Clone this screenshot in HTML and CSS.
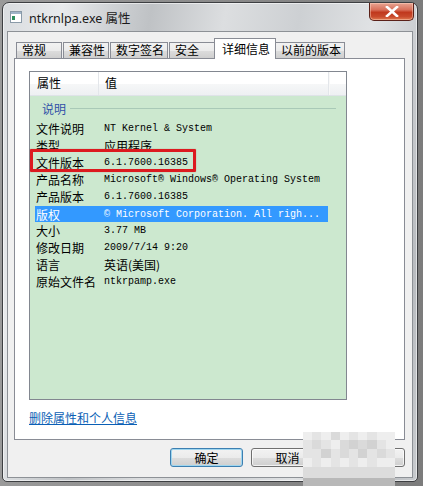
FILE: index.html
```html
<!DOCTYPE html>
<html lang="zh-CN">
<head>
<meta charset="utf-8">
<title>ntkrnlpa.exe 属性</title>
<link rel="stylesheet" href="styles.css">
</head>
<body>
<div class="window">
  <div class="titlebar">
    <svg class="app-icon" width="12" height="12" viewBox="0 0 12 12">
      <rect x="0.5" y="0.5" width="11" height="11" fill="#ffffff" stroke="#8a9aa8"/>
      <rect x="1" y="1" width="10" height="2" fill="#9fb4c8"/>
      <rect x="2" y="5" width="3" height="4" fill="#2f8f5f"/>
    </svg>
    <span class="title">ntkrnlpa.exe 属性</span>
    <div class="close-btn">
      <svg width="14" height="11" viewBox="0 0 14 11">
        <path d="M2 1 L12 10 M12 1 L2 10" stroke="#ffffff" stroke-width="2.6" stroke-linecap="square"/>
      </svg>
    </div>
  </div>
  <div class="client">
    <div class="tabs">
      <div class="tab">常规</div>
      <div class="tab">兼容性</div>
      <div class="tab">数字签名</div>
      <div class="tab">安全</div>
      <div class="tab selected">详细信息</div>
      <div class="tab">以前的版本</div>
    </div>
    <div class="page">
      <div class="list">
        <div class="list-header">
          <div class="hcol hcol-name">属性</div>
          <div class="hcol hcol-value">值</div>
          <div class="hcol hcol-rest"></div>
        </div>
        <div class="group">
          <span class="group-label">说明</span>
          <span class="group-line"></span>
        </div>
        <div class="row"><span class="name">文件说明</span><span class="value mono">NT Kernel &amp; System</span></div>
        <div class="row"><span class="name">类型</span><span class="value">应用程序</span></div>
        <div class="row"><span class="name">文件版本</span><span class="value mono">6.1.7600.16385</span></div>
        <div class="row"><span class="name">产品名称</span><span class="value mono">Microsoft® Windows® Operating System</span></div>
        <div class="row"><span class="name">产品版本</span><span class="value mono">6.1.7600.16385</span></div>
        <div class="row row-selected"><span class="name">版权</span><span class="value mono">© Microsoft Corporation. All righ...</span></div>
        <div class="row"><span class="name">大小</span><span class="value mono">3.77 MB</span></div>
        <div class="row"><span class="name">修改日期</span><span class="value mono">2009/7/14 9:20</span></div>
        <div class="row"><span class="name">语言</span><span class="value">英语(美国)</span></div>
        <div class="row"><span class="name">原始文件名</span><span class="value mono">ntkrpamp.exe</span></div>
        <div class="highlight-box"></div>
      </div>
      <a class="link" href="#">删除属性和个人信息</a>
    </div>
    <div class="buttons">
      <div class="btn default">确定</div>
      <div class="btn">取消</div>
      <div class="btn">应用(A)</div>
    </div>
  </div>
  <div class="watermark">
    <span class="w1"></span><span class="w2"></span><span class="w1"></span><span class="w3"></span><span class="w1"></span><span class="w2"></span><span class="w1"></span><span class="w2"></span><span class="w1"></span><span class="w1"></span>
    <span class="w2"></span><span class="w3"></span><span class="w2"></span><span class="w1"></span><span class="w3"></span><span class="w4"></span><span class="w3"></span><span class="w4"></span><span class="w2"></span><span class="w1"></span>
    <span class="w2"></span><span class="w2"></span><span class="w4"></span><span class="w2"></span><span class="w3"></span><span class="w2"></span><span class="w4"></span><span class="w2"></span><span class="w3"></span><span class="w2"></span>
    <span class="w1"></span><span class="w2"></span><span class="w1"></span><span class="w2"></span><span class="w1"></span><span class="w2"></span><span class="w1"></span><span class="w2"></span><span class="w1"></span><span class="w1"></span>
    <span class="w5"></span><span class="w5"></span><span class="w5"></span><span class="w5"></span><span class="w5"></span><span class="w5"></span><span class="w5"></span><span class="w5"></span><span class="w5"></span><span class="w5"></span>
    <span class="w6"></span><span class="w6"></span><span class="w6"></span><span class="w6"></span><span class="w6"></span><span class="w6"></span><span class="w6"></span><span class="w6"></span><span class="w6"></span><span class="w6"></span>
  </div>
</div>
</body>
</html>
```
FILE: styles.css
```css
html, body {
  margin: 0;
  padding: 0;
}
body {
  width: 423px;
  height: 486px;
  overflow: hidden;
  background: linear-gradient(to right, #9a9a9a, #7c7c7c);
  font-family: "Noto Sans CJK SC", "Noto Sans", sans-serif;
  font-size: 12px;
  color: #000;
}
.window {
  position: relative;
  margin: 2px 5px 0 2px;
  width: 416px;
  height: 480px;
  box-sizing: border-box;
  border: 1px solid #3d3f42;
  border-radius: 7px 7px 5px 5px;
  background: linear-gradient(100deg, #d9dcdf 0%, #e8eaec 12%, #cfd2d5 22%, #bfc2c5 30%, #dcdee0 45%, #cdd0d3 60%, #e0e2e4 75%, #b9bcc0 92%, #c8cbce 100%);
  box-shadow: inset 0 0 0 1px rgba(255,255,255,0.55);
  display: flex;
  flex-direction: column;
}
.titlebar {
  height: 28px;
  display: flex;
  align-items: center;
  flex-shrink: 0;
}
.app-icon {
  margin-left: 7px;
  flex-shrink: 0;
}
.title {
  margin-left: 7px;
  font-family: "Noto Sans", "Noto Sans CJK SC", sans-serif;
  font-size: 12.5px;
  color: #1a1a1a;
  letter-spacing: 0;
}
.close-btn {
  margin-left: auto;
  margin-right: 3px;
  align-self: flex-start;
  width: 45px;
  height: 18px;
  box-sizing: border-box;
  border: 1px solid #5a2018;
  border-top: none;
  border-radius: 0 0 5px 5px;
  background: linear-gradient(to bottom, #e8a492 0%, #d8705a 40%, #c0381d 55%, #c84a2c 80%, #e07a50 100%);
  box-shadow: inset 0 0 0 1px rgba(255,220,200,0.45);
  display: flex;
  align-items: center;
  justify-content: center;
}
.client {
  margin: 0 4px;
  height: 447px;
  box-sizing: border-box;
  border: 1px solid #8d9196;
  background: #f0f0f0;
  padding: 6px 7px 0 6px;
  display: flex;
  flex-direction: column;
}
.tabs {
  display: flex;
  align-items: flex-end;
  height: 20px;
  padding-left: 2px;
  position: relative;
  z-index: 2;
}
.tab {
  height: 16px;
  min-width: 46px;
  box-sizing: border-box;
  padding: 0 3px 0 5px;
  margin-right: 1px;
  border: 1px solid #898c95;
  border-bottom: none;
  background: linear-gradient(to bottom, #f2f2f2 0%, #ebebeb 50%, #dddddd 51%, #cfcfcf 100%);
  line-height: 14px;
  font-size: 12px;
  white-space: nowrap;
}
.tab.selected {
  height: 21px;
  margin: 0 0 -1px -2px;
  padding: 2px 5px 0 7px;
  min-width: 0;
  background: #ffffff;
  position: relative;
  z-index: 3;
  line-height: 16px;
}
.tab.selected + .tab {
  margin-left: -1px;
}
.page {
  height: 382px;
  box-sizing: border-box;
  border: 1px solid #898c95;
  background: #ffffff;
  padding: 12px 0 0 14px;
  display: flex;
  flex-direction: column;
  align-items: flex-start;
}
.list {
  position: relative;
  width: 318px;
  height: 329px;
  box-sizing: border-box;
  border: 1px solid #828790;
  background: #cce8cf;
  flex-shrink: 0;
}
.list-header {
  height: 24px;
  display: flex;
  background: linear-gradient(to bottom, #ffffff 0%, #ffffff 50%, #f6f7f8 51%, #eef0f2 100%);
  border-bottom: 1px solid #dfe3e8;
  box-sizing: border-box;
}
.hcol {
  height: 100%;
  box-sizing: border-box;
  line-height: 22px;
  border-right: 1px solid #e3e6ea;
}
.hcol-name {
  width: 69px;
  padding-left: 7px;
}
.hcol-value {
  width: 230px;
  padding-left: 6px;
}
.hcol-rest {
  flex: 1;
  border-right: none;
  border-left: 1px solid #f8f8f8;
}
.group {
  height: 24px;
  display: flex;
  align-items: center;
  padding-left: 12px;
}
.group-label {
  color: #3050a8;
  font-size: 12px;
}
.group-line {
  margin-left: 4px;
  width: 266px;
  height: 1px;
  background: #a9c9b7;
}
.row {
  height: 17px;
  display: flex;
  align-items: center;
  line-height: 15px;
}
.row .name {
  width: 68px;
  padding-left: 6px;
  flex-shrink: 0;
  white-space: nowrap;
}
.row .value {
  white-space: nowrap;
}
.mono {
  font-family: "Liberation Mono", "DejaVu Sans Mono", monospace;
  font-size: 10px;
}
.row-selected {
  margin-left: 5px;
  width: 293px;
  height: 16px;
  margin-top: 1px;
  background: #3399ff;
  color: #ffffff;
}
.row-selected .name {
  padding-left: 1px;
}
.highlight-box {
  position: absolute;
  left: 0px;
  top: 77px;
  width: 166px;
  height: 23px;
  box-sizing: border-box;
  border: 3px solid #dc1a1f;
  border-radius: 1px;
  box-shadow: 0 0 1px rgba(120,0,0,0.6);
}
.link {
  margin-top: 10px;
  color: #0b5fb5;
  text-decoration: underline;
  font-size: 12px;
  line-height: 16px;
}
.buttons {
  margin-top: 8px;
  display: flex;
  justify-content: flex-end;
  gap: 8px;
}
.btn {
  width: 73px;
  height: 19px;
  box-sizing: border-box;
  border: 1px solid #707070;
  border-radius: 3px;
  background: linear-gradient(to bottom, #f2f2f2 0%, #ebebeb 50%, #dddddd 51%, #cfcfcf 100%);
  box-shadow: inset 0 0 0 1px rgba(255,255,255,0.7);
  text-align: center;
  line-height: 17px;
  font-size: 12px;
}
.btn.default {
  border-color: #3c7fb1;
  box-shadow: inset 0 0 0 1px #9fd6ef;
}
.watermark {
  position: absolute;
  left: 300px;
  top: 429px;
  width: 92px;
  height: 56px;
  display: grid;
  grid-template-columns: repeat(10, 1fr);
  grid-template-rows: 8px 9px 9px 9px 11px 10px;
}
.w1 { background: #eeeeee; }
.w2 { background: #e4e4e4; }
.w3 { background: #dadada; }
.w4 { background: #d2d2d2; }
.w5 { background: #dcdcdc; }
.w6 { background: #b8b8b8; }
```
